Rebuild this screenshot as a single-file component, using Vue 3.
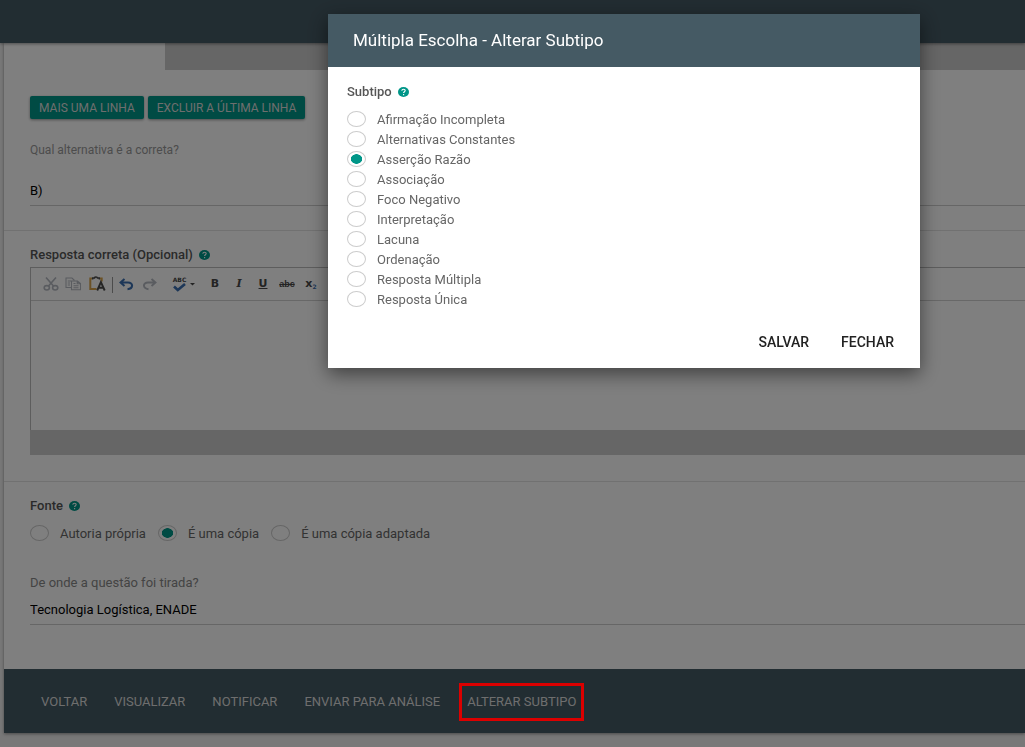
<script setup>
import { ref } from 'vue'

const subtypes = [
  'Afirmação Incompleta',
  'Alternativas Constantes',
  'Asserção Razão',
  'Associação',
  'Foco Negativo',
  'Interpretação',
  'Lacuna',
  'Ordenação',
  'Resposta Múltipla',
  'Resposta Única',
]
const sources = ['Autoria própria', 'É uma cópia', 'É uma cópia adaptada']
const actions = ['Voltar', 'Visualizar', 'Notificar', 'Enviar para análise', 'Alterar subtipo']

const subtype = ref('Asserção Razão')
const source = ref('É uma cópia')
const correct = ref('B)')
const origin = ref('Tecnologia Logística, ENADE')
</script>

<template>
  <div class="page">
    <header class="topbar"></header>

    <main class="card">
      <nav class="tabs"><span class="tab-active"></span></nav>

      <section class="block answers">
        <div class="row-buttons">
          <button type="button" class="raised">Mais uma linha</button>
          <button type="button" class="raised">Excluir a última linha</button>
        </div>
        <label class="hint small" for="correct">Qual alternativa é a correta?</label>
        <select id="correct" v-model="correct" class="field">
          <option>A)</option>
          <option>B)</option>
          <option>C)</option>
        </select>
      </section>

      <section class="block response">
        <h2 class="heading">
          Resposta correta (Opcional)
          <svg class="help" viewBox="0 0 11 10"><ellipse cx="5.5" cy="5" rx="5.5" ry="5" /><path d="M3.8 3.8C3.9 2.7 4.6 2.2 5.5 2.2S7.2 2.8 7.2 3.6C7.2 4.7 5.6 4.7 5.6 6M5.6 7.1V8.2" /></svg>
        </h2>
        <div class="editor">
          <div class="toolbar">
            <button type="button" class="tool cut" aria-label="Recortar">
              <svg width="16" height="14" viewBox="0 0 16 14" fill="none" stroke="#b4b8c0" stroke-width="1.6"><path d="M3 .5 10.5 9M13 .5 5.5 9" /><ellipse cx="3.8" cy="10.8" rx="2.6" ry="2.2" /><ellipse cx="12.2" cy="10.8" rx="2.6" ry="2.2" /></svg>
            </button>
            <button type="button" class="tool copy" aria-label="Copiar">
              <svg width="17" height="14" viewBox="0 0 17 14" fill="none" stroke="#b4b8c0" stroke-width="1.1"><path d="M6 10.5H1V1H7L9.5 3.5M2.8 4H6M2.8 6H5M2.8 8H5" /><path d="M6.5 4H12.5L15.5 6.5V12.8H6.5ZM12.2 4V6.8H15.5M8.5 6.5H10.5M8.5 8.7H13.5M8.5 10.7H13.5" /></svg>
            </button>
            <button type="button" class="tool paste" aria-label="Colar como texto">
              <svg width="17" height="16" viewBox="0 0 17 16" fill="none"><path d="M3 2.5H1.3V13H7.5M11 2.5H12.7V5.5" stroke="#d6a34c" stroke-width="2" /><path d="M3.7 3.5V2H5.5C5.5 .6 8.5 .6 8.5 2H10.3V3.5" stroke="#4b4b4b" stroke-width="1.4" /><path d="M8.2 14.5 11.9 6 15.7 14.5M9.5 11.8H14.3" stroke="#4b4b4b" stroke-width="1.9" /></svg>
            </button>
            <span class="separator"></span>
            <button type="button" class="tool undo" aria-label="Desfazer">
              <svg width="15" height="13" viewBox="0 0 15 13" fill="none" stroke="#3b6fb0" stroke-width="2.1"><path d="M5.5 1 1.5 4.5 5.5 8M2 4.5H9C14.5 4.5 14.5 10.5 8.5 11.2" /></svg>
            </button>
            <button type="button" class="tool redo" aria-label="Refazer">
              <svg width="15" height="13" viewBox="0 0 15 13" fill="none" stroke="#b4b8c0" stroke-width="1.9"><path d="M9.5 1 13.5 4.5 9.5 8M13 4.5H6C.5 4.5.5 10.5 6.5 11.2" /></svg>
            </button>
            <button type="button" class="tool spell" aria-label="Corretor ortográfico">
              <span class="abc">ABC</span>
              <svg width="13" height="9" viewBox="0 0 13 9" fill="none" stroke="#3b6fb0" stroke-width="2.6"><path d="M1 3.5 4.8 7 12 1" /></svg>
            </button>
            <svg class="caret" viewBox="0 0 5 3"><path d="M0 0H5L2.5 2.5Z" fill="#484848" /></svg>
            <button type="button" class="tool bold">B</button>
            <button type="button" class="tool italic">I</button>
            <button type="button" class="tool under">U</button>
            <button type="button" class="tool strike">abc</button>
            <button type="button" class="tool subs">x<i>2</i></button>
          </div>
          <textarea class="text" aria-label="Resposta correta"></textarea>
          <div class="statusbar"></div>
        </div>
      </section>

      <section class="block source">
        <h2 class="heading">
          Fonte
          <svg class="help" viewBox="0 0 11 10"><ellipse cx="5.5" cy="5" rx="5.5" ry="5" /><path d="M3.8 3.8C3.9 2.7 4.6 2.2 5.5 2.2S7.2 2.8 7.2 3.6C7.2 4.7 5.6 4.7 5.6 6M5.6 7.1V8.2" /></svg>
        </h2>
        <div class="options-inline">
          <label v-for="s in sources" :key="s" class="option">
            <input v-model="source" type="radio" name="source" :value="s" /><span>{{ s }}</span>
          </label>
        </div>
        <label class="hint" for="origin">De onde a questão foi tirada?</label>
        <input id="origin" v-model="origin" class="field" type="text" />
      </section>

      <footer class="actions">
        <button
          v-for="(a, i) in actions"
          :key="a"
          type="button"
          :class="['flat', { marked: i === actions.length - 1 }]"
        >{{ a }}</button>
      </footer>
    </main>

    <div class="backdrop">
      <div class="dialog" role="dialog" aria-labelledby="dialog-title">
        <h1 id="dialog-title" class="dialog-title">Múltipla Escolha - Alterar Subtipo</h1>
        <div class="dialog-body">
          <h2 class="heading">
            Subtipo
            <svg class="help" viewBox="0 0 11 10"><ellipse cx="5.5" cy="5" rx="5.5" ry="5" /><path d="M3.8 3.8C3.9 2.7 4.6 2.2 5.5 2.2S7.2 2.8 7.2 3.6C7.2 4.7 5.6 4.7 5.6 6M5.6 7.1V8.2" /></svg>
          </h2>
          <div class="options">
            <label v-for="s in subtypes" :key="s" class="option">
              <input v-model="subtype" type="radio" name="subtype" :value="s" /><span>{{ s }}</span>
            </label>
          </div>
        </div>
        <div class="dialog-actions">
          <button type="button" class="flat">Salvar</button>
          <button type="button" class="flat">Fechar</button>
        </div>
      </div>
    </div>
  </div>
</template>

<style>
body {
  background: #f0f0f0;
}
</style>

<style scoped>
.page {
  min-height: 100vh;
  overflow: hidden;
  box-sizing: border-box;
  padding-bottom: 14px;
  font: 400 13px/16px Roboto, sans-serif;
  color: #666;
}
.page * {
  box-sizing: border-box;
}
button,
input,
select,
textarea {
  margin: 0;
  padding: 0;
  border: 0;
  background: none;
  font: inherit;
  color: inherit;
}
.topbar {
  position: relative;
  height: 43px;
  background: #455a64;
  box-shadow: 0 1px 3px rgba(0, 0, 0, 0.4);
}
.card {
  margin-left: 4px;
  background: #fff;
  box-shadow: 0 1px 3px rgba(0, 0, 0, 0.4);
}
.tabs {
  display: flex;
  height: 27px;
  background: #ccc;
}
.tab-active {
  width: 161px;
  background: #fff;
}
.block {
  display: flex;
  flex-direction: column;
  padding-left: 26px;
  border-bottom: 1px solid #e2e2e2;
}
.answers {
  padding-top: 26px;
  padding-bottom: 24px;
}
.row-buttons {
  display: flex;
  gap: 4px;
  margin-bottom: 23px;
}
.raised {
  height: 23px;
  padding: 0 9px;
  border-radius: 2px;
  background: #009688;
  box-shadow: 0 1px 3px rgba(0, 0, 0, 0.4);
  color: #ddd;
  font-size: 12px;
  text-transform: uppercase;
}
.hint {
  color: #888;
}
.small {
  font-size: 12px;
  color: #999;
}
.field {
  width: 100%;
  height: 28px;
  padding-bottom: 2px;
  border-bottom: 1px solid #ccc;
  border-radius: 0;
  appearance: none;
  color: #000;
  font-size: 13px;
}
.answers .field {
  margin-top: 20px;
}
.heading {
  display: flex;
  align-items: center;
  gap: 6px;
  margin: 0;
  font: 500 13px/16px Roboto, sans-serif;
  color: #555;
}
.help {
  width: 11px;
  height: 10px;
  fill: #009688;
}
.help path {
  fill: none;
  stroke: #fff;
  stroke-width: 1.1;
}
.response {
  padding-top: 16px;
  padding-bottom: 26px;
}
.editor {
  display: flex;
  flex-direction: column;
  margin-top: 4px;
  border: 1px solid #bbb;
  border-right: 0;
  border-bottom: 0;
}
.toolbar {
  display: flex;
  align-items: center;
  height: 33px;
  padding-left: 12px;
  border-bottom: 1px solid #d0d0d0;
  color: #484848;
  font: 700 11px/14px "DejaVu Sans", sans-serif;
}
.tool {
  display: flex;
  flex: none;
  align-items: center;
  justify-content: center;
}
.copy {
  margin-left: 6px;
}
.paste {
  margin-left: 7px;
}
.separator {
  width: 1px;
  height: 16px;
  margin: 2px 6px 0 6px;
  background: #999;
}
.redo {
  margin-left: 8px;
}
.spell {
  flex-direction: column;
  width: 15px;
  margin-left: 15px;
}
.abc {
  font-size: 6px;
  line-height: 6px;
}
.caret {
  width: 5px;
  height: 3px;
  margin: 0 8px 0 3px;
}
.bold,
.italic,
.under {
  width: 24px;
}
.italic {
  font-family: "DejaVu Serif", serif;
  font-style: italic;
}
.under {
  text-decoration: underline;
}
.strike {
  width: 24px;
  font-size: 9px;
  text-decoration: line-through;
  font-family: "Liberation Sans", sans-serif;
}
.subs {
  width: 24px;
}
.subs i {
  align-self: flex-end;
  color: #3b6fb0;
  font-size: 6px;
  font-style: normal;
  line-height: 8px;
}
.text {
  display: block;
  width: 100%;
  height: 129px;
  resize: none;
}
.statusbar {
  height: 25px;
  margin-left: -1px;
  background: #ccc;
}
.source {
  padding-top: 16px;
  padding-bottom: 44px;
  border-bottom: 0;
}
.option {
  display: flex;
  align-items: center;
  gap: 11px;
}
.option input {
  flex: none;
  width: 19px;
  height: 16px;
  border: 1px solid #ccc;
  border-radius: 50%;
  appearance: none;
}
.option input:checked {
  background: radial-gradient(ellipse 6px 5px, #009688 90%, transparent);
}
.option span {
  padding-top: 2px;
}
.options-inline {
  display: flex;
  gap: 12px;
  margin: 10px 0 33px;
}
.source .field {
  margin-top: 6px;
}
.actions {
  display: flex;
  align-items: center;
  gap: 27px;
  height: 64px;
  padding: 2px 0 0 37px;
  background: #455a64;
  color: #ddd;
}
.flat {
  text-transform: uppercase;
}
.marked {
  position: relative;
}
.marked::after {
  content: "";
  position: absolute;
  inset: -11px -8px;
  z-index: 30;
  border: 3px solid #dc0000;
}
.backdrop {
  position: fixed;
  inset: 0;
  z-index: 20;
  padding: 14px 0 0 32%;
  background: rgba(0, 0, 0, 0.5);
}
.dialog {
  width: 592px;
  max-width: 90%;
  background: #fff;
  box-shadow: 0 6px 18px rgba(0, 0, 0, 0.5);
}
.dialog-title {
  margin: 0;
  padding: 16px 25px 17px;
  background: #455a64;
  color: #fff;
  font: 400 17px/20px Roboto, sans-serif;
}
.dialog-body {
  padding: 17px 19px 0;
}
.options {
  margin-top: 9px;
}
.options .option {
  height: 20px;
}
.dialog-actions {
  display: flex;
  justify-content: flex-end;
  gap: 32px;
  padding: 25px 26px 18px;
  color: #222;
  font-size: 14px;
  font-weight: 500;
}
</style>
